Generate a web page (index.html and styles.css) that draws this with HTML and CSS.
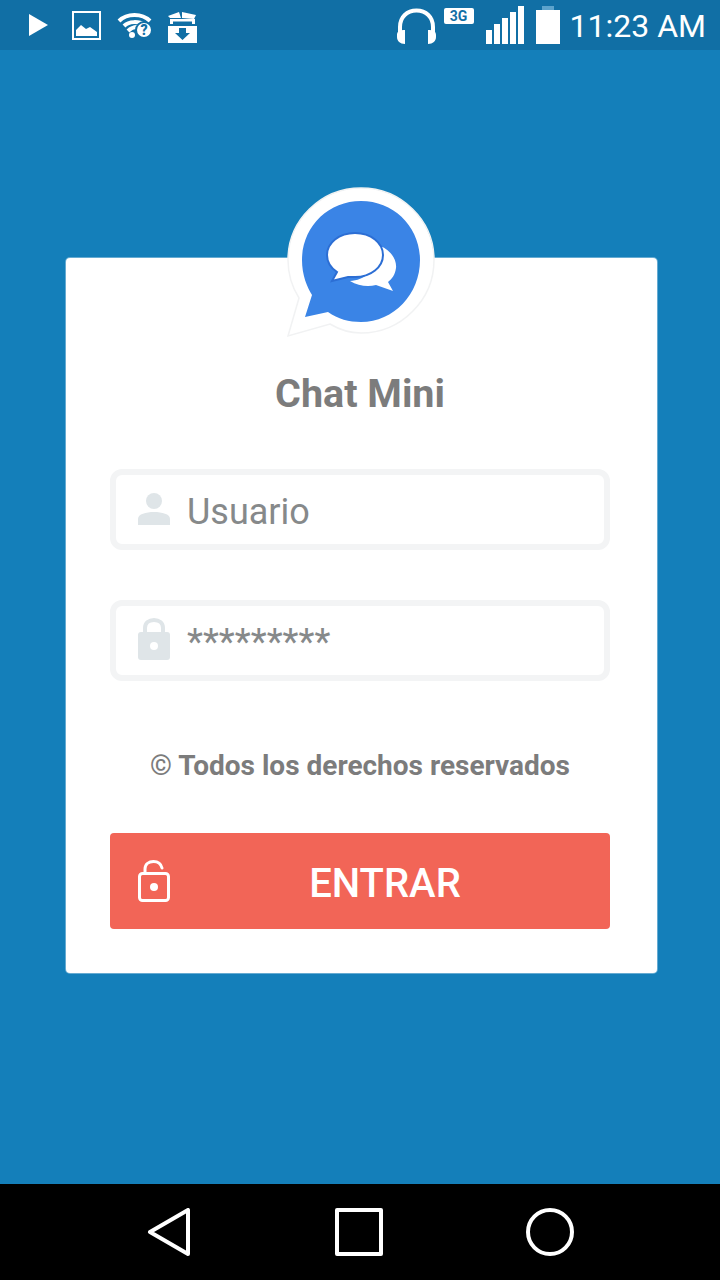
FILE: index.html
```html
<!DOCTYPE html>
<html lang="es">
<head>
  <meta charset="UTF-8" />
  <meta name="viewport" content="width=device-width, initial-scale=1.0"/>
  <title>Chat Mini</title>
  <link rel="stylesheet" href="styles.css">
</head>
<body>

  <!-- Status bar -->
  <div class="status-bar">
    <div class="status-left">
      <svg class="icon-play" viewBox="0 0 19 22"><path d="M0 0L19 11L0 22Z" fill="#fff"/></svg>
      <svg class="icon-image" viewBox="0 0 29 29">
        <rect x="1" y="1" width="27" height="27" fill="none" stroke="#fff" stroke-width="2"/>
        <path d="M4 25V19L9 14L14 18L18 16L25 21V25Z" fill="#fff"/>
      </svg>
      <svg class="icon-wifi" viewBox="0 0 35 25">
        <path d="M2 8C10 0 25 0 33 8" fill="none" stroke="#fff" stroke-width="4"/>
        <path d="M7 13C12 8 22 8 27 12" fill="none" stroke="#fff" stroke-width="4"/>
        <path d="M11 18C14 15 17 14 20 14" fill="none" stroke="#fff" stroke-width="4"/>
        <circle cx="15" cy="22" r="3" fill="#fff"/>
        <circle cx="27" cy="17" r="8" fill="#fff" stroke="#116fa5" stroke-width="2"/>
        <text x="27" y="22" class="wifi-mark">?</text>
      </svg>
      <svg class="icon-box" viewBox="0 0 31 32">
        <path d="M1 5L12 1L14 7H3Z M15 1L29 4L27 8L15 7Z" fill="#fff"/>
        <path d="M3 8H28V13H3Z M6 10.500V13H25V10.500Z" fill="#fff" fill-rule="evenodd"/>
        <path d="M1 15H30V32H1Z M12 17V22H8L15.500 29L23 22H19V17Z" fill="#fff" fill-rule="evenodd"/>
      </svg>
    </div>
    <div class="status-right">
      <svg class="icon-phones" viewBox="0 0 41 36">
        <path d="M4 25V19C4 9 11 2.500 20.500 2.500C30 2.500 37 9 37 19V25" fill="none" stroke="#fff" stroke-width="4"/>
        <path d="M1 27C1 23 4 22 9 22V36C4 36 1 33 1 29Z M40 27C40 23 37 22 32 22V36C37 36 40 33 40 29Z" fill="#fff"/>
      </svg>
      <span class="net-badge">3G</span>
      <svg class="icon-signal" viewBox="0 0 38 38">
        <path d="M0 24H6V38H0Z M8 18H14V38H8Z M16 12H22V38H16Z M24 6H30V38H24Z M32 0H38V38H32Z" fill="#fff"/>
      </svg>
      <svg class="icon-battery" viewBox="0 0 24 38">
        <rect x="6" y="0" width="12" height="4" fill="#5da3cc"/>
        <rect x="0" y="4" width="24" height="34" fill="#fff"/>
      </svg>
      <span class="clock">11:23 AM</span>
    </div>
  </div>

  <!-- Login -->
  <main class="login-screen">
    <div class="login-card">
      <svg class="chat-logo" viewBox="260 170 200 180">
        <path d="M361 188C321 188 288 220 288 260C288 275 292 287 299 298L288 336L330 324C340 330 350 333 361 333C401 333 434 300 434 260C434 220 401 188 361 188Z" fill="#fff" stroke="#f1f2f3" stroke-width="1.500"/>
        <path d="M361 201C328 201 302 227 302 260C302 275 307 287 312 295L305 317L328 312C338 319 349 322 361 322C394 322 420 294 420 260C420 227 394 201 361 201Z" fill="#3a84e6"/>
        <path d="M380 246C391 250 397 260 396 268C395 275 392 279 388 282L393 291L376 285C368 287 358 286 350 281C366 280 381 268 380 246Z" fill="#fff"/>
        <path d="M355 233C339 233 327 243 327 255C327 262 331 268 337 272L332 281L348 277C350 277 353 277 355 277C371 277 383 267 383 255C383 243 371 233 355 233Z" fill="#fff" stroke="#2c6ed4" stroke-width="2"/>
      </svg>

      <h1 class="app-title">Chat Mini</h1>

      <div class="field">
        <svg class="field-icon field-icon-user" viewBox="0 0 32 32">
          <circle cx="16" cy="8" r="8" fill="#dfe5e8"/>
          <path d="M0 32V26C0 21 8 19 16 19C24 19 32 21 32 26V32Z" fill="#dfe5e8"/>
        </svg>
        <span class="field-text">Usuario</span>
      </div>

      <div class="field field-pass">
        <svg class="field-icon field-icon-lock" viewBox="0 0 32 42">
          <path d="M7 16V10C7 5 11 2 16 2C21 2 25 5 25 10V16" fill="none" stroke="#dfe5e8" stroke-width="4"/>
          <rect x="0" y="14" width="32" height="28" rx="3" fill="#dfe5e8"/>
          <circle cx="16" cy="28" r="4" fill="#fff"/>
        </svg>
        <span class="field-text field-stars">*********</span>
      </div>

      <p class="rights">© Todos los derechos reservados</p>

      <button class="enter-btn">
        <svg class="enter-icon" viewBox="0 0 32 42">
          <path d="M7 13V9C7 4 11 1.500 15.500 1.500C20 1.500 23 4 24 8" fill="none" stroke="#fff" stroke-width="3" stroke-linecap="round"/>
          <rect x="1.500" y="13.500" width="29" height="27" rx="3" fill="none" stroke="#fff" stroke-width="3"/>
          <circle cx="16" cy="27" r="4" fill="#fff"/>
        </svg>
        <span class="enter-label">ENTRAR</span>
      </button>
    </div>
  </main>

  <!-- Navigation bar -->
  <nav class="nav-bar">
    <svg class="nav-icon" viewBox="0 0 48 48"><path d="M3 24L41 2V46Z" fill="none" stroke="#fff" stroke-width="4" stroke-linejoin="round"/></svg>
    <svg class="nav-icon nav-home" viewBox="0 0 48 48"><rect x="2" y="2" width="44" height="44" fill="none" stroke="#fff" stroke-width="4" stroke-linejoin="round"/></svg>
    <svg class="nav-icon" viewBox="0 0 48 48"><circle cx="24" cy="24" r="22" fill="none" stroke="#fff" stroke-width="4"/></svg>
  </nav>

</body>
</html>
```

FILE: styles.css
```css
:root {
  --status-color: #116fa5;
  --main-color: #147fba;
  --coral: #f26557;
  --text-gray: #7c7c7c;
  --field-border: #f3f4f5;
}

* {
  box-sizing: border-box;
}

html, body {
  height: 100%;
}

body {
  margin: 0;
  display: flex;
  flex-direction: column;
  font-family: Roboto, "Liberation Sans", sans-serif;
  background: var(--main-color);
}

/* status bar */
.status-bar {
  height: 50px;
  flex-shrink: 0;
  display: flex;
  justify-content: space-between;
  align-items: center;
  padding: 0 14px 0 29px;
  background: var(--status-color);
  color: #fff;
}

.status-left,
.status-right {
  display: flex;
  align-items: center;
}

.icon-play { width: 19px; height: 22px; margin-right: 24px; }
.icon-image { width: 29px; height: 29px; margin-right: 16px; }
.icon-wifi { width: 35px; height: 25px; margin-right: 15px; }
.icon-box { width: 31px; height: 32px; margin-top: 4px; }

.wifi-mark {
  font-size: 14px;
  font-weight: 900;
  text-anchor: middle;
  fill: var(--status-color);
}

.icon-phones { width: 41px; height: 36px; margin: 2px 7px 0 0; }

.net-badge {
  width: 30px;
  height: 16px;
  margin: -18px 12px 0 0;
  background: #fff;
  border-radius: 2px;
  color: var(--status-color);
  font-size: 14px;
  font-weight: 700;
  line-height: 16px;
  text-align: center;
}

.icon-signal { width: 38px; height: 38px; margin-right: 12px; }
.icon-battery { width: 24px; height: 38px; margin-right: 10px; }

.clock {
  margin-top: 2px;
  font-size: 32px;
  line-height: 36px;
  white-space: nowrap;
}

/* login */
.login-screen {
  flex: 1;
  padding: 208px 63px 0 66px;
}

.login-card {
  position: relative;
  height: 715px;
  padding: 107px 47px 0 44px;
  background: #fff;
  border-radius: 4px;
  box-shadow: 0 0 0 1px rgba(255, 255, 255, 0.35);
}

.chat-logo {
  position: absolute;
  top: -88px;
  left: 194px;
  width: 200px;
  height: 180px;
}

.app-title {
  margin: 0 0 46px;
  color: var(--text-gray);
  font-size: 39.5px;
  font-weight: 700;
  line-height: 58px;
  text-align: center;
}

.field {
  display: flex;
  align-items: center;
  height: 81px;
  padding-left: 22px;
  border: 6px solid var(--field-border);
  border-radius: 12px;
}

.field-pass {
  margin-top: 50px;
}

.field-icon {
  width: 32px;
  height: 32px;
  margin-right: 17px;
}

.field-icon-user {
  margin-top: -2px;
}

.field-icon-lock {
  height: 42px;
  margin-top: -4px;
}

.field-text {
  margin-top: 5px;
  color: #86898a;
  font-size: 36px;
  line-height: 44px;
}

.field-stars {
  margin-top: 2px;
  font-size: 37px;
}

.rights {
  margin: 67px 0 49px;
  color: var(--text-gray);
  font-size: 28px;
  font-weight: 700;
  line-height: 36px;
  text-align: center;
}

.enter-btn {
  display: flex;
  align-items: center;
  width: 100%;
  height: 96px;
  padding: 0 10px 0 28px;
  border: none;
  border-radius: 4px;
  background: var(--coral);
  color: #fff;
  font-family: inherit;
}

.enter-icon {
  width: 32px;
  height: 42px;
}

.enter-label {
  flex: 1;
  padding-top: 4px;
  font-size: 40px;
  font-weight: 500;
  text-align: center;
}

/* navigation bar */
.nav-bar {
  height: 96px;
  flex-shrink: 0;
  display: flex;
  justify-content: space-between;
  align-items: center;
  padding: 0 146px 0 147px;
  background: #000;
}

.nav-icon {
  width: 48px;
  height: 48px;
}

.nav-home {
  margin-right: 3px;
}
```
